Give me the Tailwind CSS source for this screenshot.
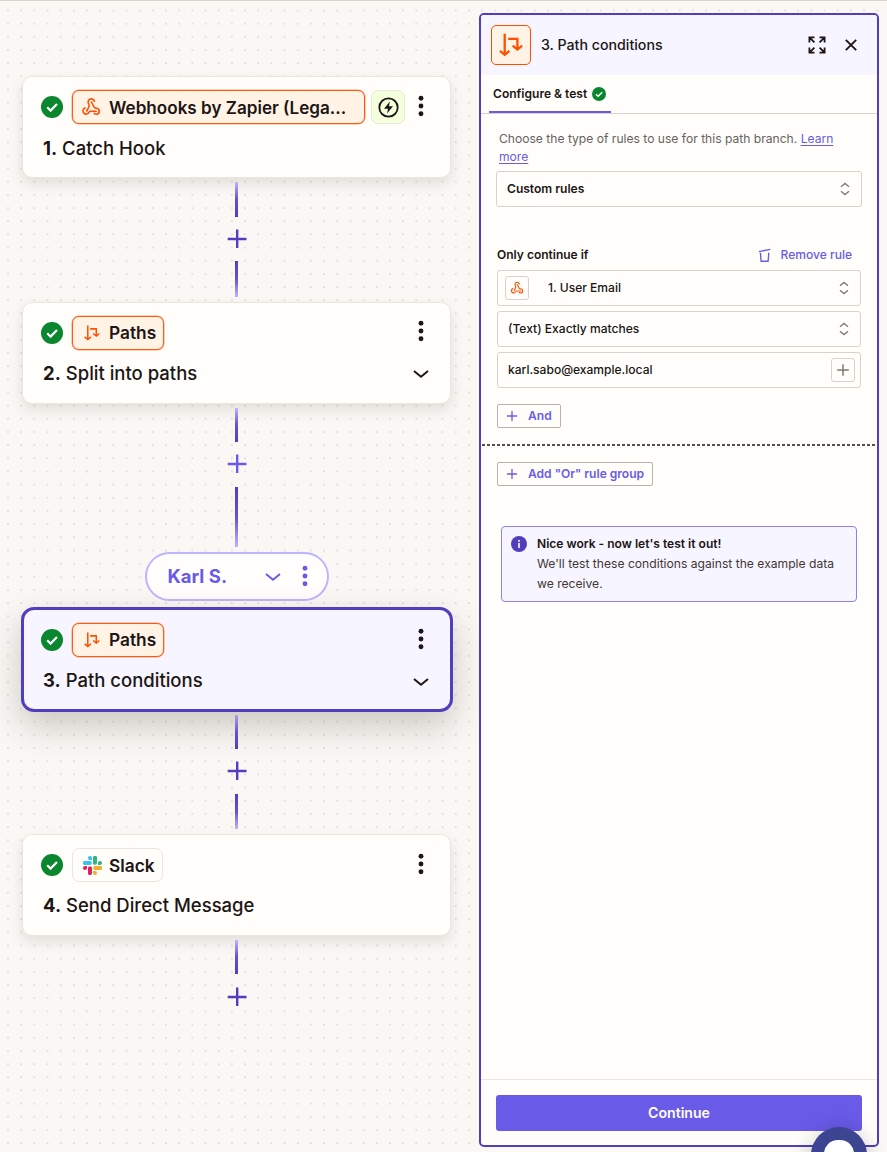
<!DOCTYPE html>
<html lang="en">
<head>
<meta charset="utf-8">
<title>Path conditions</title>
<script src="https://cdn.jsdelivr.net/npm/@tailwindcss/browser@4"></script>
</head>
<body class="h-[1152px] w-[887px] overflow-hidden bg-[#fbf7f5] font-[Inter,sans-serif] text-[#201515]">
<svg class="hidden">
  <symbol id="check" viewBox="0 0 22 22"><circle cx="11" cy="11" r="11" fill="#0a862e"/><path d="M6.2 11.3l3.4 3.3 6.4-6.5" fill="none" stroke="#fff" stroke-width="2.200"/></symbol>
  <symbol id="hook" viewBox="0 0 20 20"><g fill="none" stroke="#ff4f00" stroke-width="1.600" stroke-linecap="round" stroke-linejoin="round"><path d="M13.400 4.300a3.200 3.200 0 1 0-5.500 2.900c.8 1.200.2 2.200-.5 3.600L5.700 14"/><path d="M10.400 5l2.700 5.200c.4.800 1 .9 2 1a3 3 0 0 1 .3 6c-.9 0-1.600-.3-2.200-.8"/><path d="M4 10.900a3.200 3.200 0 1 0 4.100 4.300c.3-.8.800-.9 1.600-.9h5.500"/></g></symbol>
  <symbol id="paths" viewBox="0 0 24 24"><g fill="none" stroke="#ff4f00" stroke-width="2.300"><path d="M5.700 .800v20.500M1 17.900l4.700 3.900 4.700-3.900M9.200 5.800h9.200v10M13.700 12.700l4.700 3.900 4.700-3.900"/></g></symbol>
  <symbol id="dots" viewBox="0 0 6 22"><circle cx="3" cy="3.200" r="2.450"/><circle cx="3" cy="11" r="2.450"/><circle cx="3" cy="18.700" r="2.450"/></symbol>
  <symbol id="down" viewBox="0 0 16 10"><path d="M1 2l7 5.800L15 2" fill="none" stroke="currentColor" stroke-width="2"/></symbol>
  <symbol id="plus" viewBox="0 0 20 20"><path d="M10.200 .500v18.500M.700 10h18.800" fill="none" stroke="currentColor" stroke-width="2.400"/></symbol>
  <symbol id="add" viewBox="0 0 12 12"><path d="M6 1v10M1 6h10" fill="none" stroke="currentColor" stroke-width="1.300"/></symbol>
  <symbol id="updown" viewBox="0 0 10 14"><path d="M1 4.800L5 1.500l4 3.300M1 9.200l4 3.300 4-3.300" fill="none" stroke="#807a76" stroke-width="1.400"/></symbol>
</svg>

<div class="relative flex h-full items-start border-t border-[#d7d3c9]">
  <svg class="absolute inset-0 h-full w-full"><defs><pattern id="grid" x="1.400" y="-4.700" width="13.170" height="13.170" patternUnits="userSpaceOnUse"><circle cx="6.600" cy="1" r="0.800" fill="#cfcbc8"/></pattern></defs><rect width="887" height="1152" fill="url(#grid)"/></svg>

  <main class="relative flex w-[473px] shrink-0 flex-col items-center pt-[75px]">
    <section class="flex h-[102px] w-[429px] justify-between rounded-[10px] border border-[#e9e7dc] bg-[#fffefb] pr-[26px] pl-[18px] shadow-[0_6px_13px_rgba(60,60,40,0.13)]">
      <div class="pt-[13px]">
        <div class="flex items-center">
          <svg class="h-[22px] w-[22px]"><use href="#check"/></svg>
          <div class="ml-[9px] flex h-[34px] w-[293px] items-center rounded-[7px] border-[1.500px] border-[#ff5a14] bg-[#fff3e6] pl-[8px] shadow-[0_0_0_0.500px_#ff9a70]">
            <svg class="mr-[8px] h-[20px] w-[20px]"><use href="#hook"/></svg>
            <span class="pt-px text-[17.100px] font-semibold whitespace-nowrap">Webhooks by Zapier (Lega...</span>
          </div>
          <div class="ml-[6px] flex h-[34px] w-[34px] items-center justify-center rounded-[7px] border border-[#e9e7dc] bg-[#f4ffdb]">
            <svg class="h-[21px] w-[21px]" viewBox="0 0 21 21"><circle cx="10.500" cy="10.500" r="9.200" fill="none" stroke="#201515" stroke-width="1.800"/><path d="M11.800 4.500L6 11.700h4l-.9 4.800 5.900-7.300h-4z" fill="#201515"/></svg>
          </div>
        </div>
        <h3 class="mt-[10px] ml-[2px] text-[18.500px] leading-[28px] font-medium"><b class="font-bold">1.</b> Catch Hook</h3>
      </div>
      <svg class="mt-[18px] h-[22px] w-[6px]" fill="#201515"><use href="#dots"/></svg>
    </section>

    <div class="mt-[4px] h-[35px] w-[3px] bg-linear-to-b from-[#beb5ff] via-[#6653c8] to-[#503ebd]"></div>
    <svg class="mt-[12px] h-[20px] w-[20px] text-[#503ebd]"><use href="#plus"/></svg>
    <div class="mt-[12px] h-[36px] w-[3px] bg-linear-to-b from-[#503ebd] via-[#6653c8] to-[#beb5ff]"></div>

    <section class="mt-[4.500px] flex h-[102px] w-[429px] justify-between rounded-[10px] border border-[#e9e7dc] bg-[#fffefb] pr-[21px] pl-[18px] shadow-[0_6px_13px_rgba(60,60,40,0.13)]">
      <div class="pt-[13px]">
        <div class="flex items-center">
          <svg class="h-[22px] w-[22px]"><use href="#check"/></svg>
          <div class="ml-[9px] flex h-[34px] w-[92px] items-center rounded-[7px] border-[1.500px] border-[#ff5a14] bg-[#fff3e6] pl-[11px] shadow-[0_0_0_0.500px_#ff9a70]">
            <svg class="mr-[9px] h-[16px] w-[16px]"><use href="#paths"/></svg>
            <span class="pt-px text-[17.300px] font-semibold">Paths</span>
          </div>
        </div>
        <h3 class="mt-[9px] ml-[2px] text-[18.500px] leading-[28px] font-medium"><b class="font-bold">2.</b> Split into paths</h3>
      </div>
      <div class="flex flex-col items-center pt-[17.500px]"><svg class="h-[22px] w-[6px]" fill="#201515"><use href="#dots"/></svg><svg class="mt-[27px] h-[10px] w-[16px]"><use href="#down"/></svg></div>
    </section>

    <div class="mt-[4.500px] h-[34px] w-[3px] bg-linear-to-b from-[#beb5ff] via-[#6653c8] to-[#503ebd]"></div>
    <svg class="mt-[12px] h-[20px] w-[20px] text-[#695be8]"><use href="#plus"/></svg>
    <div class="mt-[13px] h-[60px] w-[3px] bg-linear-to-b from-[#503ebd] via-[#6653c8] to-[#beb5ff]"></div>

    <div class="mt-[4.500px] ml-px flex h-[49.500px] w-[184px] items-center rounded-full border-[2.500px] border-[#beb5ff] bg-[#fffefd] pl-[20.500px] text-[#695be8]">
      <span class="w-[97px] pt-px text-[18.500px] font-bold">Karl S.</span>
      <svg class="mt-px h-[10px] w-[16px]"><use href="#down"/></svg>
      <svg class="ml-[21px] h-[22px] w-[6px]" fill="#695be8"><use href="#dots"/></svg>
    </div>

    <section class="relative mt-[6px] ml-px flex h-[105px] w-[432px] justify-between rounded-[13px] border-[3px] border-[#503ebd] bg-[#f7f5ff] pr-[21px] pl-[17px] shadow-[0_14px_34px_rgba(50,50,30,0.24)]">
      <div class="pt-[12.500px]">
        <div class="flex items-center">
          <svg class="h-[22px] w-[22px]"><use href="#check"/></svg>
          <div class="ml-[9px] flex h-[34px] w-[92px] items-center rounded-[7px] border-[1.500px] border-[#ff5a14] bg-[#fff3e6] pl-[11px] shadow-[0_0_0_0.500px_#ff9a70]">
            <svg class="mr-[9px] h-[16px] w-[16px]"><use href="#paths"/></svg>
            <span class="pt-px text-[17.300px] font-semibold">Paths</span>
          </div>
        </div>
        <h3 class="mt-[9.500px] ml-[2px] text-[18.500px] leading-[28px] font-medium"><b class="font-bold">3.</b> Path conditions</h3>
      </div>
      <div class="flex flex-col items-center pt-[17.500px]"><svg class="h-[22px] w-[6px]" fill="#201515"><use href="#dots"/></svg><svg class="mt-[27px] h-[10px] w-[16px]"><use href="#down"/></svg></div>
    </section>

    <div class="relative mt-[3px] h-[34px] w-[3px] bg-linear-to-b from-[#aaa1e0] via-[#6653c8] to-[#503ebd]"></div>
    <svg class="relative mt-[12px] h-[20px] w-[20px] text-[#503ebd]"><use href="#plus"/></svg>
    <div class="mt-[13px] h-[35px] w-[3px] bg-linear-to-b from-[#503ebd] via-[#6653c8] to-[#beb5ff]"></div>

    <section class="mt-[5px] flex h-[102px] w-[429px] justify-between rounded-[10px] border border-[#e9e7dc] bg-[#fffefb] pr-[26px] pl-[18px] shadow-[0_6px_13px_rgba(60,60,40,0.13)]">
      <div class="pt-[13px]">
        <div class="flex items-center">
          <svg class="h-[22px] w-[22px]"><use href="#check"/></svg>
          <div class="ml-[9px] flex h-[34px] w-[91px] items-center rounded-[7px] border border-[#e9e7dc] bg-[#fffefb] pl-[10px]">
            <svg class="mr-[7px] h-[19px] w-[19px]" viewBox="0 0 24 24"><path fill="#e01e5a" d="M5.042 15.165a2.528 2.528 0 1 1-2.520-2.523h2.520v2.523zM6.313 15.165a2.527 2.527 0 0 1 5.042 0v6.313a2.528 2.528 0 1 1-5.042 0z"/><path fill="#36c5f0" d="M8.834 5.042a2.528 2.528 0 1 1 2.521-2.520v2.520zM8.834 6.313a2.528 2.528 0 0 1 0 5.042H2.522a2.528 2.528 0 1 1 0-5.042z"/><path fill="#2eb67d" d="M18.956 8.834a2.528 2.528 0 1 1 2.522 2.521h-2.522zM17.688 8.834a2.527 2.527 0 0 1-5.043 0V2.522a2.528 2.528 0 1 1 5.043 0z"/><path fill="#ecb22e" d="M15.165 18.956a2.528 2.528 0 1 1-2.520 2.522v-2.522zM15.165 17.688a2.527 2.527 0 0 1 0-5.043h6.313a2.528 2.528 0 1 1 0 5.043z"/></svg>
            <span class="pt-px text-[17.300px] font-semibold">Slack</span>
          </div>
        </div>
        <h3 class="mt-[9px] ml-[2px] text-[18.500px] leading-[28px] font-medium"><b class="font-bold">4.</b> Send Direct Message</h3>
      </div>
      <svg class="mt-[18px] h-[22px] w-[6px]" fill="#201515"><use href="#dots"/></svg>
    </section>
    <div class="mt-[4px] h-[34px] w-[3px] bg-linear-to-b from-[#beb5ff] via-[#6653c8] to-[#503ebd]"></div>
    <svg class="mt-[12.500px] h-[20px] w-[20px] text-[#503ebd]"><use href="#plus"/></svg>
  </main>

  <aside class="relative mt-[12px] ml-[6px] flex h-[1134px] w-[400px] shrink-0 flex-col rounded-[5px] border-2 border-[#503ebd] bg-[#fffefb] text-[12.050px]">
    <header class="flex h-[60px] shrink-0 items-center rounded-t-[3px] bg-[#f7f5ff] pr-[20px] pl-[10px]">
      <div class="flex h-[40px] w-[40px] items-center justify-center rounded-[5px] border border-[#ff4f00] bg-[#fff3e6]"><svg class="h-[24px] w-[24px]"><use href="#paths"/></svg></div>
      <h2 class="ml-[10px] flex-1 text-[14.200px] font-medium">3. Path conditions</h2>
      <svg class="mr-[19px] h-[18px] w-[18px]" viewBox="0 0 18 18" fill="none" stroke="#201515" stroke-width="1.800"><path d="M1.400 6.500V1.400h5.100M1.400 1.400l5 5M11.500 1.400h5.100v5.100M16.600 1.400l-5 5M1.400 11.500v5.100h5.100M1.400 16.600l5-5M11.500 16.600h5.100v-5.100M16.600 16.600l-5-5"/></svg>
      <svg class="h-[12px] w-[12px]" viewBox="0 0 12 12" stroke="#201515" stroke-width="1.900"><path d="M.8.8l10.400 10.400M11.200.8L.8 11.200"/></svg>
    </header>
    <nav class="flex h-[39px] shrink-0 border-b border-[#d7d3c9] pl-[8px]">
      <div class="flex h-[38px] w-[122px] items-center border-b-2 border-[#695be8] pt-[2px] pl-[4px] font-semibold">Configure &amp; test<svg class="ml-[5px] h-[14px] w-[14px]"><use href="#check"/></svg></div>
    </nav>
    <div class="flex flex-1 flex-col">
      <p class="mt-[16px] ml-[18px] w-[350px] text-[12.100px] leading-[18px] text-[#666260]">Choose the type of rules to use for this path branch. <a class="text-[#695be8] underline underline-offset-2">Learn<br>more</a></p>
      <div class="mt-[5px] ml-[15px] flex h-[36px] w-[366px] items-center justify-between rounded-[3px] border border-[#d7d3c9] pr-[11px] pl-[10px] font-semibold">Custom rules<svg class="h-[14px] w-[10px]"><use href="#updown"/></svg></div>
      <div class="mt-[38px] ml-[16px] flex h-[20px] w-[355px] items-center"><span class="flex-1 text-[12px] font-semibold">Only continue if</span>
        <svg class="mr-[10px] h-[14px] w-[13px]" viewBox="0 0 13 14" fill="none" stroke="#695be8" stroke-width="1.400"><path d="M.8 3.600L12.300 1.400M2.400 4.800l.7 8.400h7l.7-8.400"/></svg>
        <span class="font-medium text-[#695be8]">Remove rule</span></div>
      <div class="mt-[5px] ml-[16px] flex w-[364px] flex-col gap-[5px] font-medium">
        <div class="flex h-[36px] items-center rounded-[3px] border border-[#d7d3c9] pr-[11px] pl-[7px]">
          <div class="flex h-[24px] w-[24px] items-center justify-center rounded-[3px] border border-[#d7d3c9]"><svg class="h-[14px] w-[14px]"><use href="#hook"/></svg></div>
          <span class="ml-[19px] flex-1">1. User Email</span><svg class="h-[14px] w-[10px]"><use href="#updown"/></svg></div>
        <div class="flex h-[36px] items-center justify-between rounded-[3px] border border-[#d7d3c9] pr-[11px] pl-[10px]">(Text) Exactly matches<svg class="h-[14px] w-[10px]"><use href="#updown"/></svg></div>
        <div class="flex h-[36px] items-center justify-between rounded-[3px] border border-[#d7d3c9] pr-[5px] pl-[10px]">karl.sabo@example.local
          <div class="flex h-[24px] w-[24px] items-center justify-center rounded-[3px] border border-[#d7d3c9] text-[#807a76]"><svg class="h-[14px] w-[14px]"><use href="#add"/></svg></div></div>
      </div>
      <button class="mt-[16px] ml-[16px] flex h-[24px] w-[64px] items-center rounded-[2px] border border-[#b5b2aa] pl-[8px] font-semibold text-[#695be8]"><svg class="mr-[10px] h-[12px] w-[12px]"><use href="#add"/></svg>And</button>
      <div class="mt-[16px] ml-px h-[2px] bg-[repeating-linear-gradient(90deg,#574e4c_0_3px,transparent_3px_5px)]"></div>
      <button class="mt-[16px] ml-[16px] flex h-[24px] w-[156px] items-center rounded-[2px] border border-[#b5b2aa] pl-[8px] font-semibold whitespace-nowrap text-[#695be8]"><svg class="mr-[10px] h-[12px] w-[12px]"><use href="#add"/></svg>Add "Or" rule group</button>
      <div class="mt-[40px] ml-[20px] flex h-[76px] w-[356px] rounded-[4px] border border-[#8b80fa] bg-[#f7f5ff] pt-[7px] pl-[9px] leading-[20px]">
        <svg class="mt-[2px] mr-[10px] h-[16px] w-[16px] shrink-0" viewBox="0 0 16 16"><circle cx="8" cy="8" r="8" fill="#503ebd"/><path d="M8 7v5M8 4v1.800" stroke="#fff" stroke-width="1.600"/></svg>
        <div><div class="font-semibold">Nice work - now let's test it out!</div><p class="w-[305px] text-[12.130px] text-[#413735]">We'll test these conditions against the example data we receive.</p></div>
      </div>
    </div>
    <footer class="h-[66px] shrink-0 border-t border-[#e8e7e4] px-[15px] pt-[15px]">
      <button class="h-[36px] w-full rounded-[3px] bg-[#695be8] text-[14.100px] font-semibold text-[#fffdf9]">Continue</button>
    </footer>
  </aside>

  <div class="absolute top-[1126px] left-[811px] flex h-[56px] w-[56px] justify-center rounded-full bg-[#3d4592] pt-[13px] shadow-[0_2px_20px_rgba(0,0,0,0.22)]"><div class="h-[30px] w-[30px] rounded-[14px] bg-white"></div></div>
</div>
</body>
</html>
